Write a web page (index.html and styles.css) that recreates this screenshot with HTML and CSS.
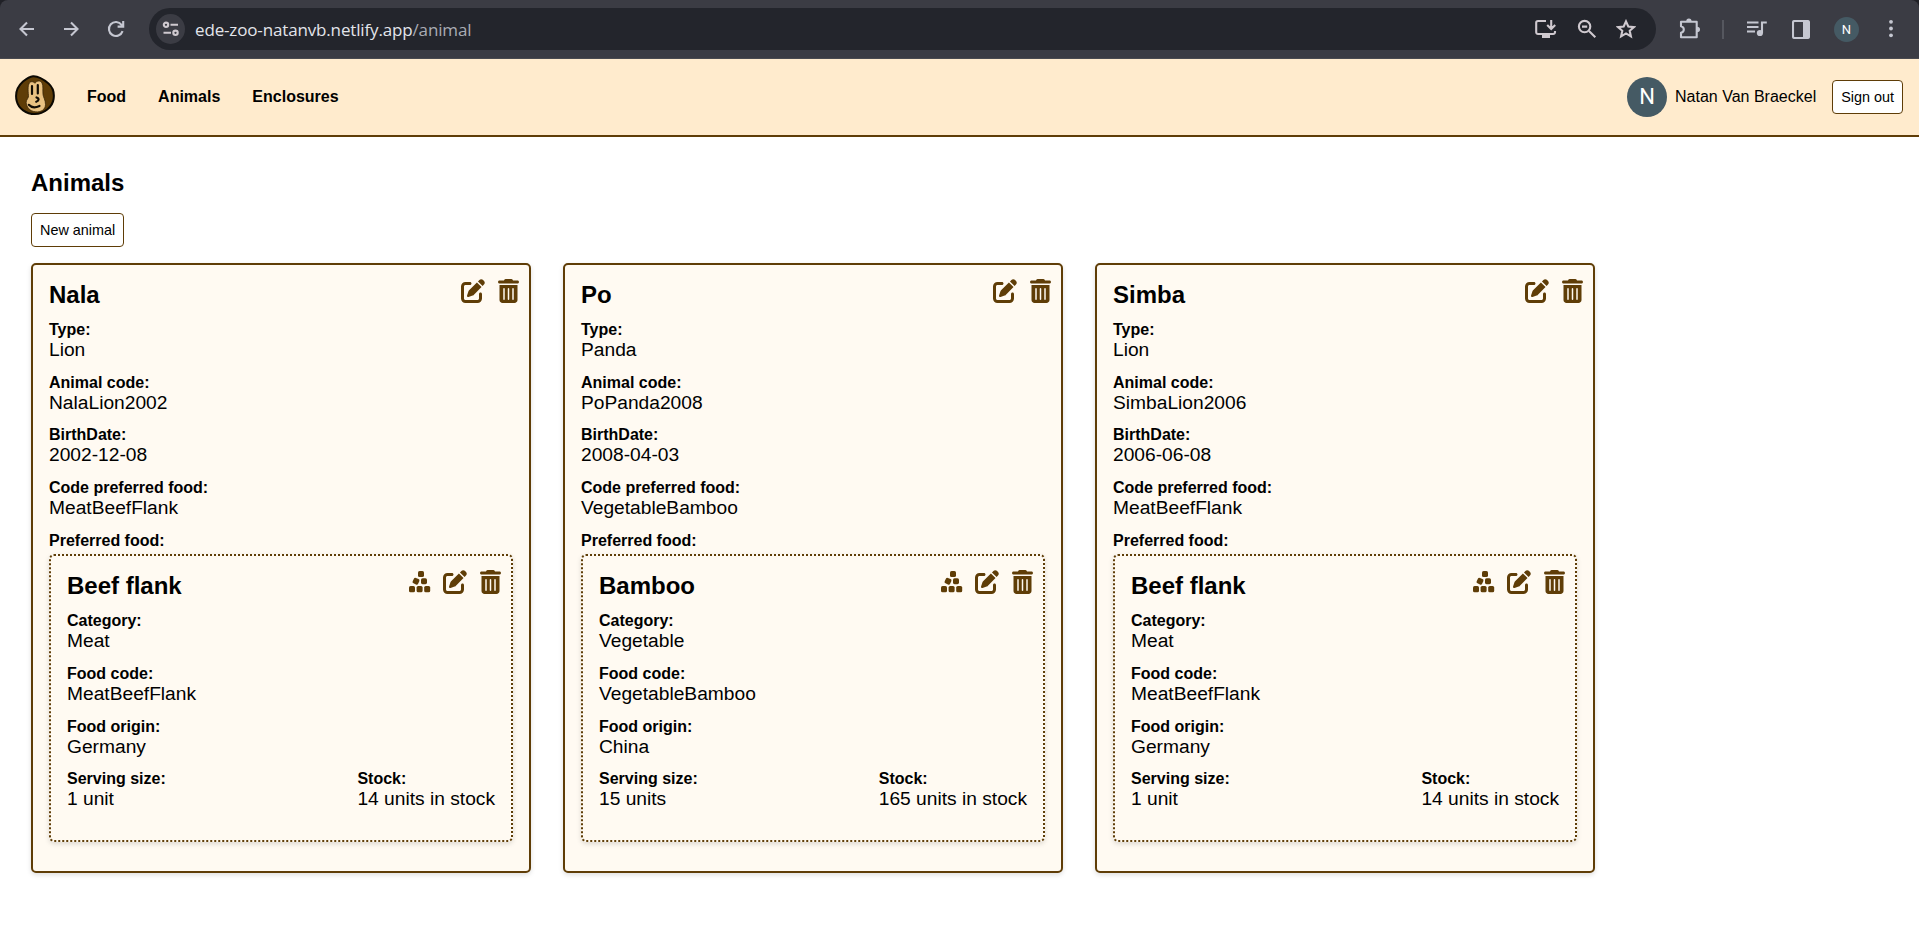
FILE: index.html
```html
<!DOCTYPE html>
<html lang="en">
<head>
<meta charset="utf-8">
<title>Animals</title>
<link rel="stylesheet" href="styles.css">
</head>
<body>
<svg class="sprite" aria-hidden="true">
  <symbol id="edit" viewBox="0 0 512 512"><path d="M471.6 21.7c-21.9-21.9-57.3-21.9-79.2 0L362.3 51.7l97.9 97.9 30.1-30.1c21.9-21.9 21.9-57.3 0-79.2L471.6 21.7zm-299.2 220c-6.1 6.1-10.8 13.6-13.5 21.9l-29.6 88.8c-2.9 8.6-.6 18.1 5.8 24.6s15.9 8.7 24.6 5.8l88.8-29.6c8.2-2.7 15.7-7.4 21.9-13.5L437.7 172.3 339.7 74.3 172.4 241.7zM96 64C43 64 0 107 0 160V416c0 53 43 96 96 96H352c53 0 96-43 96-96V320c0-17.7-14.3-32-32-32s-32 14.3-32 32v96c0 17.7-14.3 32-32 32H96c-17.7 0-32-14.3-32-32V160c0-17.7 14.3-32 32-32h96c17.7 0 32-14.3 32-32s-14.3-32-32-32H96z"/></symbol>
  <symbol id="trash" viewBox="0 0 448 512"><path d="M135.2 17.7C140.6 6.8 151.7 0 163.8 0H284.2c12.1 0 23.2 6.8 28.6 17.7L320 32h96c17.7 0 32 14.3 32 32s-14.3 32-32 32H32C14.3 96 0 81.7 0 64S14.3 32 32 32h96l7.2-14.3zM32 128H416V448c0 35.3-28.7 64-64 64H96c-35.3 0-64-28.7-64-64V128zm96 64c-8.8 0-16 7.2-16 16V432c0 8.8 7.2 16 16 16s16-7.2 16-16V208c0-8.8-7.2-16-16-16zm96 0c-8.8 0-16 7.2-16 16V432c0 8.8 7.2 16 16 16s16-7.2 16-16V208c0-8.8-7.2-16-16-16zm96 0c-8.8 0-16 7.2-16 16V432c0 8.8 7.2 16 16 16s16-7.2 16-16V208c0-8.8-7.2-16-16-16z"/></symbol>
  <symbol id="stack" viewBox="0 0 22 24"><rect x="9" y="1" width="6" height="6" rx="1.6"/><rect x="4" y="8.2" width="6" height="6" rx="1.6" transform="rotate(25 7 11.2)"/><rect x="12" y="8.2" width="6" height="6" rx="1.6"/><rect x="0" y="16" width="6" height="6.3" rx="1.6"/><rect x="7.6" y="16" width="6" height="6.3" rx="1.6"/><rect x="15.2" y="16" width="6" height="6.3" rx="1.6"/></symbol>
</svg>

<div class="browser">
  <div class="browser-nav">
    <svg width="16" height="16" viewBox="0 0 16 16"><path d="M15 8H2M8 1.5L1.5 8L8 14.5"/></svg>
    <svg width="16" height="16" viewBox="0 0 16 16"><path d="M1 8H14M8 1.5L14.5 8L8 14.5"/></svg>
    <svg width="18" height="18" viewBox="0 0 18 18"><path d="M15.6 11.2A7 7 0 1 1 14.6 4.8L16 6.3M16.2 1V6.6H10.6"/></svg>
  </div>
  <div class="omnibox">
    <span class="site-info"><svg width="18" height="16" viewBox="0 0 18 16"><circle cx="4" cy="3.8" r="2.2"/><path d="M8.5 3.8H16M1.5 11.8H9"/><circle cx="13.5" cy="11.8" r="2.2"/></svg></span>
    <span class="url">ede-zoo-natanvb.netlify.app<span class="path">/animal</span></span>
    <div class="omni-actions">
      <svg width="22" height="20" viewBox="0 0 22 20"><path d="M11 2H3a1.8 1.8 0 0 0-1.8 1.8v9.4A1.8 1.8 0 0 0 3 15h15.200a1.800 1.800 0 0 0 1.800-1.800V12M16.200 1V9M12.200 6L16.200 10L20.200 6"/><path class="solid" d="M7 15h8v4H7z"/></svg>
      <svg width="20" height="20" viewBox="0 0 20 20"><circle cx="7.600" cy="7.600" r="5.700"/><path d="M5 7.600H10.200M12 12L18.300 18.300"/></svg>
      <svg width="20" height="20" viewBox="0 0 20 20"><path d="M10 2.400L12.300 7.500L17.900 8.100L13.700 11.800L14.900 17.300L10 14.400L5.100 17.300L6.300 11.800L2.100 8.100L7.700 7.500Z"/></svg>
    </div>
  </div>
  <div class="browser-tools">
    <svg class="puzzle" width="22" height="22" viewBox="0 0 22 22"><path d="M2 3.800H17.700V19.200H2V14.800C3.800 14.300 4.800 13.200 4.800 11.500S3.800 8.700 2 8.200Z" stroke-linejoin="round"/><path class="solid" d="M7.200 3.500a2.700 3 0 0 1 5.400 0ZM18 8.800a3 2.700 0 0 1 0 5.400Z"/></svg>
    <span class="divider"></span>
    <svg class="music" width="20" height="18" viewBox="0 0 20 18"><path d="M0 2.500H11.500M0 7H11.500M0 11.500H8M15 13V2.500H19.800"/><circle class="solid" cx="12.900" cy="13" r="3.100"/></svg>
    <svg class="panel" width="18" height="19" viewBox="0 0 18 19"><rect x="1" y="1" width="16" height="17" rx="1.500"/><path class="solid" d="M11 1h6v17h-6z"/></svg>
    <span class="profile">N</span>
    <svg class="dots" width="4" height="20" viewBox="0 0 4 20"><circle class="solid" cx="2" cy="2.800" r="1.900"/><circle class="solid" cx="2" cy="9.500" r="1.900"/><circle class="solid" cx="2" cy="16.300" r="1.900"/></svg>
  </div>
</div>

<header class="navbar">
  <svg class="logo" viewBox="0 0 40 40">
    <path d="M18 1.200C24 .8 29 4.600 33.500 8.500C38 12.500 39.500 18 38.600 24C37.500 32 29 39 20 39C11 39 3.500 33.500 1.700 26C-.2 18 3 11 8 6.500C11 4 14 1.500 18 1.200Z" fill="#5f3d07" stroke="#0c0903" stroke-width="2"/>
    <path d="M13.500 20.500C13 15 12.500 8.500 15.500 7C17.500 6.200 19 7 20 8.300C21.500 5.500 25.500 5.200 27 8C28.500 11 27.500 15 28 19.500C28.200 22 30.500 25 30.500 29.500C30.500 34.500 26 37.400 20.500 36.800C14.500 36.200 11.500 32 11.200 27.500C11.100 24.500 14 23 13.500 20.500Z" fill="#e9c282" stroke="#2c1c04" stroke-width=".7"/>
    <path d="M17 11V19M22.800 10V18.500M21.500 22.500C24.500 23.500 24 26 21.200 26.800M13.800 29.800C16.500 32.800 21 32.600 24.500 31" fill="none" stroke="#120d04" stroke-width="2.200" stroke-linecap="round"/>
  </svg>
  <nav class="links"><a>Food</a><a>Animals</a><a>Enclosures</a></nav>
  <div class="account">
    <span class="avatar">N</span>
    <span class="name">Natan Van Braeckel</span>
    <button class="button">Sign out</button>
  </div>
</header>

<main class="content">
  <h1 class="title">Animals</h1>
  <button class="button">New animal</button>
  <div class="cards">
    <article class="card">
      <div class="card-head"><h2 class="title">Nala</h2><div class="actions"><svg class="icon"><use href="#edit"/></svg><svg class="icon trash"><use href="#trash"/></svg></div></div>
      <div class="field"><b>Type:</b><span>Lion</span></div>
      <div class="field"><b>Animal code:</b><span>NalaLion2002</span></div>
      <div class="field"><b>BirthDate:</b><span>2002-12-08</span></div>
      <div class="field"><b>Code preferred food:</b><span>MeatBeefFlank</span></div>
      <div class="field"><b>Preferred food:</b>
        <section class="card food">
          <div class="card-head"><h2 class="title">Beef flank</h2><div class="actions"><svg class="icon stack"><use href="#stack"/></svg><svg class="icon"><use href="#edit"/></svg><svg class="icon trash"><use href="#trash"/></svg></div></div>
          <div class="field"><b>Category:</b><span>Meat</span></div>
          <div class="field"><b>Food code:</b><span>MeatBeefFlank</span></div>
          <div class="field"><b>Food origin:</b><span>Germany</span></div>
          <div class="pair"><div class="field"><b>Serving size:</b><span>1 unit</span></div><div class="field"><b>Stock:</b><span>14 units in stock</span></div></div>
        </section>
      </div>
    </article>
    <article class="card">
      <div class="card-head"><h2 class="title">Po</h2><div class="actions"><svg class="icon"><use href="#edit"/></svg><svg class="icon trash"><use href="#trash"/></svg></div></div>
      <div class="field"><b>Type:</b><span>Panda</span></div>
      <div class="field"><b>Animal code:</b><span>PoPanda2008</span></div>
      <div class="field"><b>BirthDate:</b><span>2008-04-03</span></div>
      <div class="field"><b>Code preferred food:</b><span>VegetableBamboo</span></div>
      <div class="field"><b>Preferred food:</b>
        <section class="card food">
          <div class="card-head"><h2 class="title">Bamboo</h2><div class="actions"><svg class="icon stack"><use href="#stack"/></svg><svg class="icon"><use href="#edit"/></svg><svg class="icon trash"><use href="#trash"/></svg></div></div>
          <div class="field"><b>Category:</b><span>Vegetable</span></div>
          <div class="field"><b>Food code:</b><span>VegetableBamboo</span></div>
          <div class="field"><b>Food origin:</b><span>China</span></div>
          <div class="pair"><div class="field"><b>Serving size:</b><span>15 units</span></div><div class="field"><b>Stock:</b><span>165 units in stock</span></div></div>
        </section>
      </div>
    </article>
    <article class="card">
      <div class="card-head"><h2 class="title">Simba</h2><div class="actions"><svg class="icon"><use href="#edit"/></svg><svg class="icon trash"><use href="#trash"/></svg></div></div>
      <div class="field"><b>Type:</b><span>Lion</span></div>
      <div class="field"><b>Animal code:</b><span>SimbaLion2006</span></div>
      <div class="field"><b>BirthDate:</b><span>2006-06-08</span></div>
      <div class="field"><b>Code preferred food:</b><span>MeatBeefFlank</span></div>
      <div class="field"><b>Preferred food:</b>
        <section class="card food">
          <div class="card-head"><h2 class="title">Beef flank</h2><div class="actions"><svg class="icon stack"><use href="#stack"/></svg><svg class="icon"><use href="#edit"/></svg><svg class="icon trash"><use href="#trash"/></svg></div></div>
          <div class="field"><b>Category:</b><span>Meat</span></div>
          <div class="field"><b>Food code:</b><span>MeatBeefFlank</span></div>
          <div class="field"><b>Food origin:</b><span>Germany</span></div>
          <div class="pair"><div class="field"><b>Serving size:</b><span>1 unit</span></div><div class="field"><b>Stock:</b><span>14 units in stock</span></div></div>
        </section>
      </div>
    </article>
  </div>
</main>
</body>
</html>
```
FILE: styles.css
```css
* { box-sizing: border-box; }
body { margin: 0; background: #fff; color: #000; font: 16px/18px "Liberation Sans", Arial, sans-serif; }
.sprite { display: none; }

.browser { display: flex; align-items: center; height: 59px; padding: 0 26px 0 19px; background: #3b3c44; border-bottom: 1px solid #494a50; border-radius: 8px 8px 0 0; box-shadow: 0 -8px 0 8px #202127; clip-path: inset(0); }
.browser svg { fill: none; stroke: #c5c7d1; stroke-width: 2.1; flex: none; }
.browser .solid { fill: #c5c7d1; stroke: none; }
.browser-nav { display: flex; align-items: center; gap: 28px; width: 130px; }
.omnibox { display: flex; align-items: center; width: 1507px; height: 42px; padding: 0 20px 0 7px; background: #23252c; border-radius: 21px; }
.browser .omnibox svg { stroke: #cfc9cf; }
.browser .omnibox .solid { fill: #cfc9cf; }
.site-info { display: flex; align-items: center; justify-content: center; width: 29px; height: 30px; border-radius: 50%; background: #3b3c44; }
.url { margin-left: 10px; padding-top: 1px; color: #e2e4ea; font: 17px/24px "Open Sans", "Noto Sans", sans-serif; letter-spacing: -0.15px; }
.path { color: #a9acb4; }
.omni-actions { display: flex; align-items: center; gap: 19.5px; margin-left: auto; }
.browser-tools { display: flex; align-items: center; flex: 1; padding-left: 23px; }
.divider { width: 2px; height: 19px; margin-left: 21px; background: #55575f; }
.music { margin-left: 23px; }
.panel { margin-left: 25px; }
.profile { display: flex; align-items: center; justify-content: center; width: 25px; height: 25px; margin-left: 24px; border-radius: 50%; background: #455a64; color: #fff; font: 13px/25px Roboto, sans-serif; }
.dots { margin-left: auto; }

.navbar { display: flex; align-items: center; height: 78px; padding: 0 16px 0 15px; background: #ffebcd; border-bottom: 2px solid #5f3d07; }
.logo { width: 40px; height: 40px; margin-bottom: 4px; }
.links { display: flex; gap: 32px; margin-left: 32px; font-weight: 700; }
.account { display: flex; align-items: center; margin-left: auto; }
.avatar { display: flex; align-items: center; justify-content: center; width: 40px; height: 40px; margin-right: 8px; border-radius: 50%; background: #455a64; color: #fff; font: 22px/40px Roboto, sans-serif; }
.name { margin-right: 16px; }
.button { display: block; height: 34px; padding: 0 8px; background: #fff; border: 1px solid #5f3d07; border-radius: 4px; color: #000; font: 14.4px/16px "Liberation Sans", Arial, sans-serif; }

.content { padding: 32px 31px; }
.title { margin: 0; font-size: 24px; line-height: 27px; font-weight: 700; }
.content > .title { margin-bottom: 17px; }
.cards { display: flex; gap: 32px; margin-top: 16px; }
.card { width: 500px; padding: 16px; background: #fffaf2; border: 2px solid #5f3d07; border-radius: 5px; box-shadow: 0 2px 5px rgba(0, 0, 0, .13); }
.card-head { display: flex; justify-content: space-between; margin-bottom: 12.8px; }
.actions { display: flex; gap: 13px; height: 24px; margin: -2px -6px 0 0; }
.icon { width: 24px; height: 24px; fill: #5f3d07; }
.icon.trash { width: 21px; }
.icon.stack { width: 22px; margin-right: -1px; }
.field { display: flex; flex-direction: column; margin-bottom: 12.8px; }
.field > span { font-size: 19.2px; line-height: 22px; }
.pair { display: flex; justify-content: space-between; }
.food { width: 100%; margin-top: 4px; padding-bottom: 16.8px; border-style: dotted; }
.food .card-head { margin-bottom: 13px; }
```
